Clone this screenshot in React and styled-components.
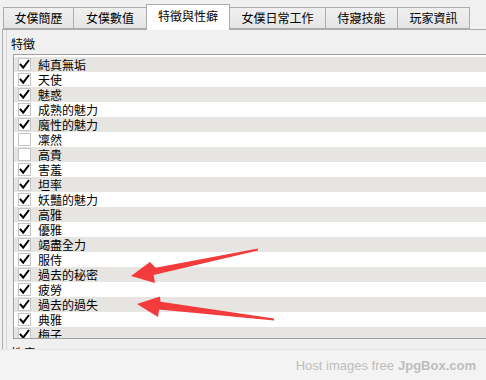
import React from "react";
import styled, { createGlobalStyle } from "styled-components";

const GlobalStyle = createGlobalStyle`
    html, body {
        margin: 0;
        padding: 0;
        background: #f3f3f3;
        width: 486px;
        height: 380px;
        overflow: hidden;
    }
    #root {
        position: relative;
        width: 486px;
        height: 380px;
    }
`;

const CJK = `"Noto Sans CJK TC", "Noto Sans CJK SC", sans-serif`;

const tabs = [
    { name: "女僕簡歷", width: 71 },
    { name: "女僕數值", width: 72 },
    { name: "特徵與性癖", width: 84, active: true },
    { name: "女僕日常工作", width: 96 },
    { name: "侍寢技能", width: 72 },
    { name: "玩家資訊", width: 72 },
];

const traits = [
    ["純真無垢", true],
    ["天使", true],
    ["魅惑", true],
    ["成熟的魅力", true],
    ["魔性的魅力", true],
    ["凜然", false],
    ["高貴", false],
    ["害羞", true],
    ["坦率", true],
    ["妖豔的魅力", true],
    ["高雅", true],
    ["優雅", true],
    ["竭盡全力", true],
    ["服侍", true],
    ["過去的秘密", true],
    ["疲勞", true],
    ["過去的過失", true],
    ["典雅", true],
    ["梅子", true],
];

const Window = styled.div`
    height: 349px;
    background: #f0f0f0;
    overflow: hidden;
    display: flex;
    flex-direction: column;
    padding-top: 4px;
    box-sizing: border-box;
    font-family: ${CJK};
    font-size: 12px;
    color: #000;
`;

const TabStrip = styled.div`
    display: flex;
    align-items: flex-end;
    height: 25px;
    padding-left: 3px;
`;

const Tab = styled.div`
    box-sizing: border-box;
    width: ${(p) => p.$width}px;
    height: ${(p) => (p.$active ? 26 : 22)}px;
    margin-bottom: ${(p) => (p.$active ? -1 : 0)}px;
    border: 1px solid #acacac;
    border-bottom: ${(p) => (p.$active ? "none" : "1px solid #acacac")};
    border-left: ${(p) => (p.$first || p.$active ? "1px solid #acacac" : "none")};
    border-right: ${(p) => (p.$beforeActive ? "none" : "1px solid #acacac")};
    background: ${(p) =>
        p.$active ? "#ffffff" : "linear-gradient(#f0f0f0, #e5e5e5)"};
    display: flex;
    align-items: center;
    justify-content: center;
    padding-bottom: ${(p) => (p.$active ? 3 : 1)}px;
    line-height: 14px;
    white-space: nowrap;
    position: relative;
    z-index: ${(p) => (p.$active ? 2 : 1)};
`;

const Panel = styled.div`
    flex: 1;
    margin-left: 2px;
    border-top: 1px solid #acacac;
    border-left: 1px solid #acacac;
    background: #f0f0f0;
    display: flex;
    min-height: 0;
`;

const Page = styled.div`
    flex: 1;
    margin-left: 3px;
    border-left: 1px solid #d6d6d6;
    padding: 6px 0 0 4px;
    display: flex;
    flex-direction: column;
    min-height: 0;
`;

const GroupLabel = styled.div`
    line-height: 16px;
    height: 16px;
    margin-bottom: 2px;
    margin-top: ${(p) => p.$gap || 0}px;
`;

const ListBox = styled.div`
    margin-left: 2px;
    width: 520px;
    height: 285px;
    box-sizing: border-box;
    border: 1px solid #a0a0a0;
    border-right: none;
    background: #ffffff;
    padding-top: 2px;
    overflow: hidden;
    flex-shrink: 0;
`;

const Row = styled.div`
    height: 15px;
    display: flex;
    align-items: center;
    padding-left: 4px;
    gap: 7px;
    background: ${(p) => (p.$striped ? "#e6e5e1" : "#ffffff")};
`;

const Box = styled.div`
    width: 13px;
    height: 13px;
    box-sizing: border-box;
    border: 1px solid #c4c4c4;
    background: #ffffff;
    display: flex;
    align-items: center;
    justify-content: center;
    flex-shrink: 0;
`;

const RowText = styled.span`
    line-height: 15px;
    white-space: nowrap;
`;

const Footer = styled.div`
    height: 31px;
    display: flex;
    justify-content: flex-end;
    align-items: center;
    padding: 1px 10px 0 0;
    box-sizing: border-box;
    font-family: "Liberation Sans", Arial, sans-serif;
    font-size: 13px;
    color: #bdbdbd;
    border-top: 1px solid #e4e4e4;
    b {
        font-weight: bold;
        margin-left: 4px;
    }
`;

const Overlay = styled.svg`
    position: absolute;
    left: 0;
    top: 0;
    pointer-events: none;
`;

function Check() {
    return (
        <svg width="11" height="11" viewBox="0 0 11 11">
            <path d="M1.6 5.6 L4.2 8.6 L9.4 1.8" fill="none" stroke="#000" strokeWidth="2" strokeLinecap="square" />
        </svg>
    );
}

function Arrows() {
    return (
        <Overlay width="486" height="380">
            <polygon
                points="258,248.6 155.6,267.8 150,262 131,276 155,283 153.6,275 258,250.6"
                fill="#f43b3b"
            />
            <polygon
                points="274,318.6 160.5,301.8 160,296.5 137,304 158,317 159.2,309.6 274,320.4"
                fill="#f43b3b"
            />
        </Overlay>
    );
}

function App() {
    const activeIndex = tabs.findIndex((t) => t.active);
    return (
        <>
            <GlobalStyle />
            <Window>
                <TabStrip>
                    {tabs.map((tab, i) => (
                        <Tab
                            key={tab.name}
                            $width={tab.width}
                            $active={tab.active}
                            $first={i === 0}
                            $beforeActive={i === activeIndex - 1}
                        >
                            {tab.name}
                        </Tab>
                    ))}
                </TabStrip>
                <Panel>
                    <Page>
                        <GroupLabel>特徵</GroupLabel>
                        <ListBox>
                            {traits.map(([name, checked], i) => (
                                <Row key={name} $striped={i % 2 === 0}>
                                    <Box>{checked && <Check />}</Box>
                                    <RowText>{name}</RowText>
                                </Row>
                            ))}
                        </ListBox>
                        <GroupLabel $gap={6}>性癖</GroupLabel>
                    </Page>
                </Panel>
            </Window>
            <Footer>
                Host images free<b>JpgBox.com</b>
            </Footer>
            <Arrows />
        </>
    );
}

export default App;
